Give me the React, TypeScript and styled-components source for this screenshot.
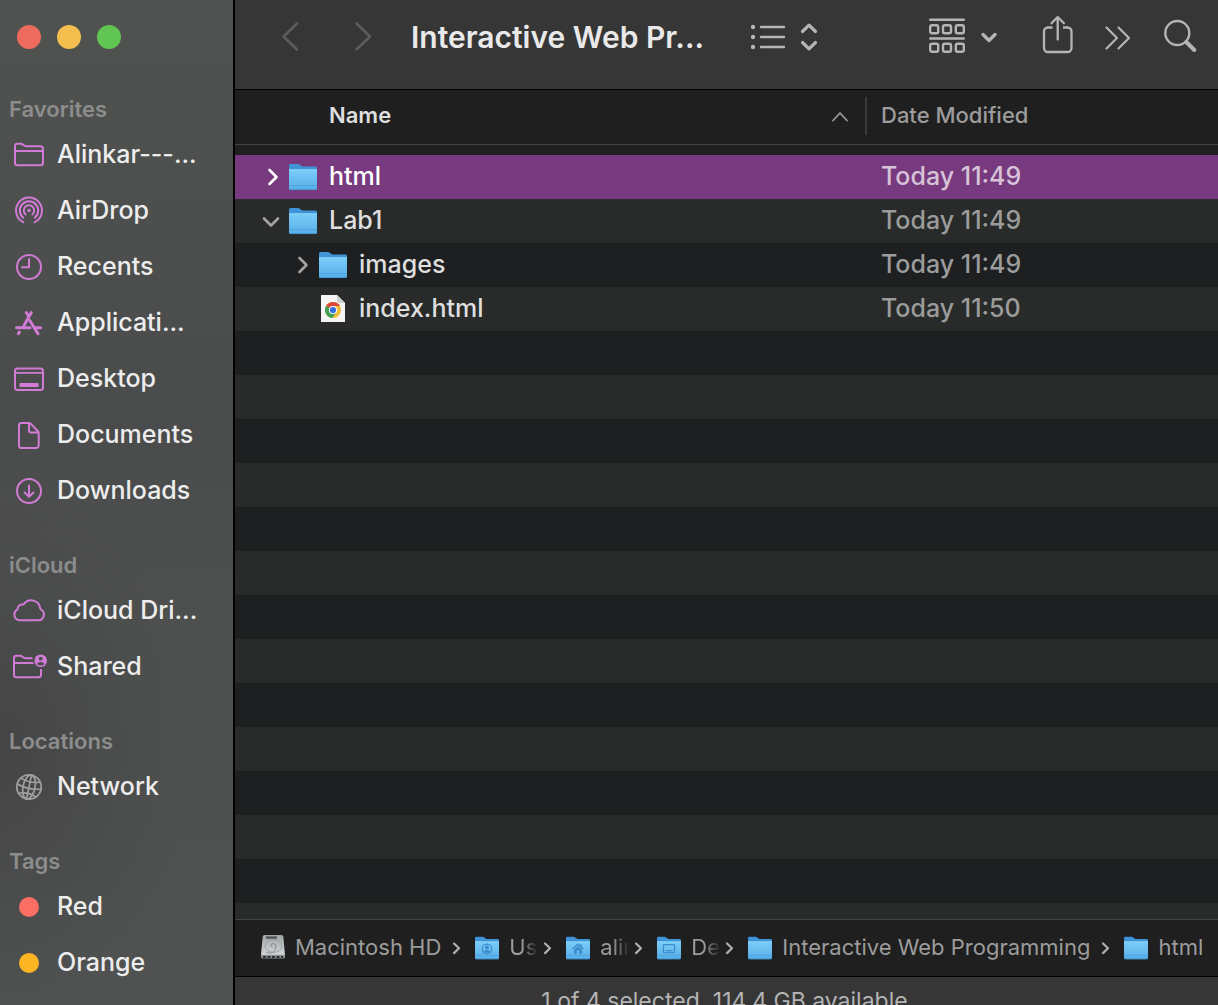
import React from "react";
import styled, { createGlobalStyle } from "styled-components";

const PINK = "#d27bd6";

const GlobalStyle = createGlobalStyle`
  *, *::before, *::after { box-sizing: border-box; }
  body {
    margin: 0;
    background: #1e1f21;
    font-family: Inter, "Liberation Sans", sans-serif;
    color: #e0e0e0;
  }
  button {
    font: inherit;
    color: inherit;
    background: none;
    border: 0;
    padding: 0;
    cursor: default;
  }
  svg { display: block; flex: none; }
`;

const Window = styled.div`
  display: flex;
  height: 100vh;
  overflow: hidden;
`;

/* ---------- Sidebar ---------- */

const Sidebar = styled.nav`
  flex: none;
  width: 235px;
  overflow: hidden;
  border-right: 2px solid #000;
  background:
    radial-gradient(ellipse 190px 260px at 0 750px, #454546 0%, rgba(69, 69, 70, 0) 100%),
    linear-gradient(180deg, #505250 0%, #4c4e4d 30%, #4a4b4c 42%, #4e504f 60%, #505251 100%);
`;

const TrafficLights = styled.div`
  display: flex;
  align-items: center;
  gap: 16px;
  height: 62px;
  padding: 12px 0 0 17px;
`;

const Light = styled.button<{ $color: string }>`
  width: 24px;
  height: 24px;
  border-radius: 50%;
  background: ${(p) => p.$color};
`;

const Section = styled.section`
  padding-top: 30px;
`;

const SectionTitle = styled.h2`
  margin: 0;
  padding-left: 9px;
  font-size: 22px;
  font-weight: 600;
  line-height: 34px;
  color: #8c8d8c;
`;

const SideList = styled.ul`
  margin: 0;
  padding: 0;
  list-style: none;
`;

const SideLink = styled.a`
  display: flex;
  align-items: center;
  gap: 10px;
  height: 56px;
  padding-left: 11px;
  font-size: 25px;
  font-weight: 500;
  line-height: 32px;
  color: #ededed;
  text-decoration: none;
  white-space: nowrap;
`;

/* ---------- Main pane ---------- */

const Main = styled.main`
  flex: 1;
  min-width: 0;
  display: flex;
  flex-direction: column;
`;

const Toolbar = styled.header`
  flex: none;
  display: flex;
  align-items: center;
  height: 90px;
  padding: 0 20px 16px 38px;
  background: #363636;
  border-bottom: 1px solid #000;
`;

const NavButtons = styled.div`
  display: flex;
  gap: 36px;
  color: #5c5c5c;
`;

const Title = styled.h1`
  flex: 0 1 337px;
  min-width: 0;
  margin: 0 0 0 30px;
  font-size: 30px;
  font-weight: 600;
  line-height: 36px;
  color: #e9e9e9;
  white-space: nowrap;
`;

const Tools = styled.div`
  display: flex;
  gap: 24px;
  margin-left: auto;
`;

const ToolButton = styled.button`
  flex: none;
  color: #b5b5b5;
`;

const ListArea = styled.div`
  flex: 1;
  min-height: 0;
  overflow: hidden;
  background:
    linear-gradient(#1e1f21, #1e1f21) 0 0 / 100% 65px no-repeat,
    linear-gradient(#1e1f21 50%, #292b2a 50%) 0 65px / 100% 88px;
`;

const FileTable = styled.table`
  width: 100%;
  table-layout: fixed;
  border-collapse: separate;
  border-spacing: 0;

  tbody::before {
    content: "";
    display: table-row;
    height: 10px;
  }
`;

const NameCol = styled.col`
  width: auto;
`;

const DateCol = styled.col`
  width: 353px;
`;

const HeadCell = styled.th`
  height: 55px;
  padding: 7px 0 0;
  background: #1f1f1f;
  border-bottom: 1px solid #424242;
  text-align: left;
  vertical-align: top;
`;

const SortButton = styled.button<{ $active?: boolean }>`
  display: flex;
  align-items: center;
  justify-content: space-between;
  width: 100%;
  height: 38px;
  padding: 0 16px 2px ${(p) => (p.$active ? 94 : 14)}px;
  border-left: ${(p) => (p.$active ? "0" : "2px solid #3a3a3a")};
  font-size: 22px;
  font-weight: ${(p) => (p.$active ? 600 : 500)};
  line-height: 28px;
  color: ${(p) => (p.$active ? "#dedede" : "#9c9c9c")};
`;

const Row = styled.tr<{ $selected?: boolean }>`
  height: 44px;
  background: ${(p) => (p.$selected ? "#783a7e" : "transparent")};
  color: ${(p) => (p.$selected ? "#ffffff" : "#dfdfdf")};
  --toggle: ${(p) => (p.$selected ? "#ffffff" : "#a3a3a3")};
  --date: ${(p) => (p.$selected ? "#d6c3d8" : "#9b9c9b")};
`;

const Cell = styled.td`
  padding: 0;
  font-size: 25px;
  font-weight: 500;
  line-height: 32px;
`;

const DateCell = styled(Cell)`
  padding: 0 0 2px 16px;
  color: var(--date);
`;

const NameLine = styled.div<{ $depth: number }>`
  display: flex;
  align-items: center;
  padding-left: ${(p) => 24 + p.$depth * 30}px;
`;

const ToggleSlot = styled.span`
  display: flex;
  width: 30px;
  color: var(--toggle);
`;

const FileName = styled.span`
  margin-left: 12px;
  padding-bottom: 2px;
`;

const PathBar = styled.nav`
  flex: none;
  display: flex;
  align-items: center;
  height: 58px;
  padding-left: 26px;
  background: #1f1f1f;
  border-top: 1px solid #424443;
  border-bottom: 1px solid #000;
  color: #9c9c9c;
`;

const Crumb = styled.a`
  display: flex;
  align-items: center;
  gap: 10px;
  font-size: 22px;
  line-height: 28px;
  color: inherit;
  text-decoration: none;
  white-space: nowrap;
`;

const CrumbText = styled.span<{ $faded?: boolean }>`
  padding-bottom: 2px;
  ${(p) =>
    p.$faded
      ? `width: 28px; overflow: hidden;
         mask-image: linear-gradient(90deg, #000 45%, transparent 105%);`
      : "padding-right: 5px;"}
`;

const CrumbArrow = styled.span`
  padding: 0 14px 0 6px;
`;

const StatusBar = styled.footer`
  flex: none;
  height: 28px;
  overflow: hidden;
  padding: 10px 4px 0 0;
  background: #363636;
  color: #b4b4b4;
  font-size: 23px;
  line-height: 28px;
  text-align: center;
`;

/* ---------- Icons ---------- */

type Kids = { children: React.ReactNode; color?: string };

const SideIcon = ({ children, color = PINK }: Kids) => (
  <svg width="36" height="36" viewBox="0 0 36 36" fill="none" stroke={color} strokeWidth="2" strokeLinecap="round" strokeLinejoin="round" aria-hidden="true">
    {children}
  </svg>
);

const icons: Record<string, React.ReactNode> = {
  folder: (
    <SideIcon>
      <path d="M4 26.500V10.200a2.400 2.400 0 0 1 2.400-2.400h3.400c1 0 1.600.3 2.300.9l.7.600c.7.600 1.300.9 2.300.9h14.400a2.500 2.500 0 0 1 2.500 2.500v14a2.500 2.500 0 0 1-2.500 2.500H6.500A2.500 2.500 0 0 1 4 26.700z" />
      <path d="M4 15h28" />
    </SideIcon>
  ),
  airdrop: (
    <SideIcon>
      <path d="M12.300 30.200a13 13 0 1 1 11.400 0" />
      <path d="M12.200 25.700a9.200 9.200 0 1 1 11.600 0" />
      <path d="M14.700 22.400a5.200 5.200 0 1 1 6.600 0" />
      <circle cx="18" cy="18.500" r="1.800" fill={PINK} stroke="none" />
    </SideIcon>
  ),
  recents: (
    <SideIcon>
      <circle cx="18" cy="19" r="12" />
      <path d="M18 11v8.300h-7" />
    </SideIcon>
  ),
  apps: (
    <SideIcon>
      <g strokeWidth="3">
        <path d="M20.300 8.500 12.500 22.500" />
        <path d="m15.300 8.500 2 3.300" />
        <path d="m18.800 16.500 8.200 13.300" />
        <path d="M5.500 23.700h13.500M25 23.700h4.500" />
        <path d="m7.400 29.700 1-1.700" />
      </g>
    </SideIcon>
  ),
  desktop: (
    <SideIcon>
      <rect x="4" y="8.500" width="28" height="21.500" rx="2.500" />
      <path d="M4 12.800h28" strokeWidth="1.700" />
      <rect x="8.500" y="23" width="19" height="4" rx="0.800" fill={PINK} stroke="none" />
    </SideIcon>
  ),
  documents: (
    <SideIcon>
      <path d="M10.500 7h7.300c.8 0 1.500.3 2.100.9l7 7.400c.5.500.8 1.200.8 2v12.200a2.500 2.500 0 0 1-2.500 2.500H10.500A2.500 2.500 0 0 1 8 29.500v-20A2.500 2.500 0 0 1 10.500 7z" />
      <path d="M18 7.500v7c0 1.300.6 1.900 1.900 1.900H27" />
    </SideIcon>
  ),
  downloads: (
    <SideIcon>
      <circle cx="18" cy="19" r="12" />
      <path d="M18 13.500v11M13.500 20.500l4.500 4.200 4.500-4.200" />
    </SideIcon>
  ),
  cloud: (
    <SideIcon>
      <path d="M8.500 28.300h18.800a5.800 5.800 0 0 0 2.700-10.800c-.5-.3-.7-.6-.8-1.200a9 9 0 0 0-16.200-4.300c-.3.500-.7.600-1.300.5a4.600 4.600 0 0 0-5.100 4.200c0 .6-.2.900-.7 1.200A5.700 5.700 0 0 0 8.500 28.300z" />
    </SideIcon>
  ),
  shared: (
    <SideIcon>
      <path d="M21.500 10.200h-7c-1 0-1.600-.3-2.300-.9l-.7-.6c-.7-.6-1.300-.900-2.300-.900H5.400A2.400 2.400 0 0 0 3 10.200v16.500a2.500 2.500 0 0 0 2.500 2.500H27.500a2.500 2.500 0 0 0 2.500-2.500V21" strokeLinecap="butt" />
      <path d="M3 15h19.500" strokeLinecap="butt" />
      <circle cx="29.700" cy="12.700" r="6.300" fill={PINK} stroke="none" />
      <circle cx="29.700" cy="10.700" r="1.900" fill="#4d4f4e" stroke="none" />
      <path d="M26 16.300c.6-1.600 2-2.300 3.700-2.300s3.100.7 3.700 2.300c-1 .8-2.200 1.200-3.700 1.200s-2.700-.4-3.700-1.200z" fill="#4d4f4e" stroke="none" />
    </SideIcon>
  ),
  network: (
    <SideIcon color="#a0a0a0">
      <g strokeWidth="1.700">
        <circle cx="18" cy="19" r="12.200" />
        <g transform="rotate(12 18 19)">
          <ellipse cx="18" cy="19" rx="6" ry="12.200" />
          <path d="M18 6.800v24.400M6 18.500c7.500 2.500 16.500 2.500 24 0M8.300 12c6 2.200 13.400 2.200 19.400 0M9 27.300c5.500-2.300 12.500-2.300 18 0" />
        </g>
      </g>
    </SideIcon>
  ),
  red: (
    <SideIcon>
      <circle cx="18" cy="19" r="10" fill="#fd6e64" stroke="none" />
    </SideIcon>
  ),
  orange: (
    <SideIcon>
      <circle cx="18" cy="19" r="10" fill="#feb524" stroke="none" />
    </SideIcon>
  ),
};

const Chevron = ({ open }: { open?: boolean }) => (
  <svg width="24" height="24" viewBox="0 0 24 24" fill="none" stroke="currentColor" strokeWidth="2.600" strokeLinecap="round" strokeLinejoin="round" aria-hidden="true">
    <path d={open ? "M5 9.500l7 7 7-7" : "M10.500 5l7 7-7 7"} />
  </svg>
);

const CrumbChevron = () => (
  <svg width="9" height="14" viewBox="0 0 9 14" fill="none" stroke="#b0b0b0" strokeWidth="2.200" strokeLinecap="round" strokeLinejoin="round" aria-hidden="true">
    <path d="M2 2.500l5 4.800-5 4.800" />
  </svg>
);

const FolderGradients = () => (
  <svg width="0" height="0" style={{ position: "absolute" }} aria-hidden="true">
    <defs>
      <linearGradient id="folderFront" x1="0" y1="0" x2="0" y2="1">
        <stop offset="0" stopColor="#7bcdf8" />
        <stop offset="1" stopColor="#57ade8" />
      </linearGradient>
      <linearGradient id="driveTop" x1="0" y1="0" x2="0" y2="1">
        <stop offset="0" stopColor="#9fa3a6" />
        <stop offset="1" stopColor="#d2d7da" />
      </linearGradient>
    </defs>
  </svg>
);

const Folder = ({ size = 28, mark }: { size?: number; mark?: "user" | "home" | "desktop" }) => (
  <svg width={size} height={size} viewBox="0 0 28 28" aria-hidden="true">
    <path d="M0 2.500a1.500 1.500 0 0 1 1.500-1.500h7.300c.8 0 1.400.2 2 .7l1.700 1.300c.4.300.8.500 1.300.5h12.700A1.500 1.500 0 0 1 28 5V12H0z" fill="#3f94d8" />
    <path d="M0 6.500h28v19a1.500 1.500 0 0 1-1.500 1.500h-25A1.500 1.500 0 0 1 0 25.500z" fill="url(#folderFront)" />
    <path d="M0 6.800h28" stroke="#92d9fb" strokeWidth="0.800" />
    <path d="M0 22.500h28" stroke="#4a9fdb" strokeWidth="0.800" />
    <path d="M0.500 26.600h27" stroke="#3d8fcc" strokeWidth="0.800" />
    {mark === "user" && (
      <g fill="none" stroke="#3a8bc9" strokeWidth="1.400">
        <circle cx="14" cy="15" r="5.500" />
        <circle cx="14" cy="13.300" r="1.500" fill="#3a8bc9" />
        <path d="M10.800 18.500c1.500-2 4.900-2 6.400 0z" fill="#3a8bc9" />
      </g>
    )}
    {mark === "home" && (
      <g fill="#3a8bc9">
        <path d="M14 8.500l-6.800 6 1 1.200 5.800-5 5.800 5 1-1.200-2.300-2v-3h-1.500v1.700z" />
        <path d="M9.500 15.800L14 12l4.500 3.800v5h-3v-3.800h-3v3.800h-3z" />
      </g>
    )}
    {mark === "desktop" && (
      <g fill="none" stroke="#3a8bc9" strokeWidth="1.300">
        <rect x="7.500" y="10" width="13" height="9.500" rx="1" />
        <path d="M10 17.200h8" />
      </g>
    )}
  </svg>
);

const HardDrive = () => (
  <svg width="24" height="26" viewBox="0 0 24 26" aria-hidden="true">
    <path d="M3.500 0h17a1.800 1.800 0 0 1 1.800 1.500L24 20H0L1.700 1.500A1.800 1.800 0 0 1 3.500 0z" fill="url(#driveTop)" />
    <path d="M0 19.700h24v2.300a1.500 1.500 0 0 1-1.500 1.500h-21A1.500 1.500 0 0 1 0 22z" fill="#8d9295" />
    <path d="M2 22h20" stroke="#2e3032" strokeWidth="2" strokeDasharray="3 1.500" />
    <rect x="5" y="1.300" width="11" height="2.600" fill="#555a5d" />
    <ellipse cx="12.500" cy="11" rx="8.500" ry="6.300" fill="none" stroke="#9aa0a4" strokeWidth="1" />
    <path d="M5 17c4 2 8 1 9-2.500l1-3.500a2.500 2 0 1 0-3.500 1.500" fill="none" stroke="#868c90" strokeWidth="1" />
  </svg>
);

const HtmlFile = () => (
  <svg width="28" height="28" viewBox="0 0 28 28" aria-hidden="true">
    <path d="M2 0h16l8 8v19H2z" fill="#f5f5f5" />
    <path d="M18 0l8 8h-6.500A1.500 1.500 0 0 1 18 6.500z" fill="#cfcfcf" />
    <circle cx="14" cy="15" r="8" fill="#f2bf3b" />
    <path d="M14 15L7.070 11a8 8 0 0 1 13.860 0z" fill="#d9483b" />
    <path d="M7.070 11a8 8 0 0 0 6.200 11.970L17.500 17 14 15z" fill="#3f9f55" />
    <path d="M14 11h6.930L17.500 17z" fill="#f2bf3b" />
    <circle cx="14" cy="15" r="4" fill="#fff" />
    <circle cx="14" cy="15" r="3.100" fill="#2f6fe0" />
  </svg>
);

const strokeProps = {
  fill: "none",
  stroke: "currentColor",
  strokeLinecap: "round" as const,
  strokeLinejoin: "round" as const,
  "aria-hidden": true,
};

const NavArrow = ({ d }: { d: string }) => (
  <svg width="36" height="44" viewBox="0 0 36 44" strokeWidth="2.600" {...strokeProps}>
    <path d={d} />
  </svg>
);

const ViewIcon = () => (
  <svg width="72" height="44" viewBox="0 0 72 44" strokeWidth="2.400" {...strokeProps}>
    <path d="M13 12h23M13 22h23M13 32h23" />
    <g fill="currentColor" stroke="none">
      <circle cx="5" cy="12" r="2.200" />
      <circle cx="5" cy="22" r="2.200" />
      <circle cx="5" cy="32" r="2.200" />
    </g>
    <path d="M54.500 16.500l6.500-6.300 6.500 6.300M54.500 27.500l6.500 6.300 6.500-6.300" strokeWidth="3.200" />
  </svg>
);

const GroupIcon = () => (
  <svg width="88" height="44" viewBox="0 0 88 44" strokeWidth="2.400" {...strokeProps}>
    <path d="M4.200 4.700h33.600M4.200 23.500h33.600" />
    {[10.200, 28.800].map((y) =>
      [4.200, 17, 29.800].map((x) => <rect key={`${x}-${y}`} x={x} y={y} width="8" height="8" rx="1.800" />)
    )}
    <path d="M57 19.500l6 6 6-6" strokeWidth="3.400" />
  </svg>
);

const ShareIcon = () => (
  <svg width="40" height="44" viewBox="0 0 40 44" strokeWidth="2.300" {...strokeProps}>
    <path d="M14.500 12.500H10a4 4 0 0 0-4 4v16.500a4 4 0 0 0 4 4h19.500a4 4 0 0 0 4-4V16.500a4 4 0 0 0-4-4H25" strokeLinecap="butt" />
    <path d="M19.700 24.500V2.500M13.500 8.200l6.200-6.200 6.200 6.200" />
  </svg>
);

const MoreIcon = () => (
  <svg width="36" height="44" viewBox="0 0 36 44" strokeWidth="2.200" {...strokeProps}>
    <path d="M4.500 12.500l10.500 10.500L4.500 33.500M16.500 12.500L27 23 16.500 33.500" />
  </svg>
);

const SearchIcon = () => (
  <svg width="36" height="44" viewBox="0 0 36 44" {...strokeProps}>
    <circle cx="15.300" cy="18" r="12" strokeWidth="2.400" />
    <path d="M24.300 27l8 8" strokeWidth="4" />
  </svg>
);

/* ---------- Data ---------- */

const sections = [
  {
    title: "Favorites",
    items: [
      ["folder", "Alinkar---..."],
      ["airdrop", "AirDrop"],
      ["recents", "Recents"],
      ["apps", "Applicati..."],
      ["desktop", "Desktop"],
      ["documents", "Documents"],
      ["downloads", "Downloads"],
    ],
  },
  { title: "iCloud", items: [["cloud", "iCloud Dri..."], ["shared", "Shared"]] },
  { title: "Locations", items: [["network", "Network"]] },
  { title: "Tags", items: [["red", "Red"], ["orange", "Orange"]] },
];

type FileRow = { name: string; date: string; depth: number; kind: "folder" | "file"; open?: boolean; selected?: boolean };

const files: FileRow[] = [
  { name: "html", date: "Today 11:49", depth: 0, kind: "folder", selected: true },
  { name: "Lab1", date: "Today 11:49", depth: 0, kind: "folder", open: true },
  { name: "images", date: "Today 11:49", depth: 1, kind: "folder" },
  { name: "index.html", date: "Today 11:50", depth: 1, kind: "file" },
];

const crumbs: { name: string; icon: React.ReactNode; faded?: boolean }[] = [
  { name: "Macintosh HD", icon: <HardDrive /> },
  { name: "Us", icon: <Folder size={24} mark="user" />, faded: true },
  { name: "alin", icon: <Folder size={24} mark="home" />, faded: true },
  { name: "De", icon: <Folder size={24} mark="desktop" />, faded: true },
  { name: "Interactive Web Programming", icon: <Folder size={24} /> },
  { name: "html", icon: <Folder size={24} /> },
];

export default function App() {
  return (
    <>
      <GlobalStyle />
      <FolderGradients />
      <Window>
        <Sidebar aria-label="Sidebar">
          <TrafficLights>
            <Light $color="#ed6a5e" aria-label="Close" />
            <Light $color="#f5bf4f" aria-label="Minimize" />
            <Light $color="#61c554" aria-label="Zoom" />
          </TrafficLights>
          {sections.map((section) => (
            <Section key={section.title}>
              <SectionTitle>{section.title}</SectionTitle>
              <SideList>
                {section.items.map(([icon, label]) => (
                  <li key={label}>
                    <SideLink href="#">
                      {icons[icon]}
                      <span>{label}</span>
                    </SideLink>
                  </li>
                ))}
              </SideList>
            </Section>
          ))}
        </Sidebar>

        <Main>
          <Toolbar>
            <NavButtons>
              <button aria-label="Back" disabled>
                <NavArrow d="M24 8.500L10.500 21.500l13.500 13" />
              </button>
              <button aria-label="Forward" disabled>
                <NavArrow d="M11.500 8.500L25 21.500 11.500 34.500" />
              </button>
            </NavButtons>
            <Title>Interactive Web Pr...</Title>
            <ToolButton aria-label="View as list">
              <ViewIcon />
            </ToolButton>
            <Tools>
              <ToolButton aria-label="Group items">
                <GroupIcon />
              </ToolButton>
              <ToolButton aria-label="Share">
                <ShareIcon />
              </ToolButton>
              <ToolButton aria-label="More">
                <MoreIcon />
              </ToolButton>
              <ToolButton aria-label="Search">
                <SearchIcon />
              </ToolButton>
            </Tools>
          </Toolbar>

          <ListArea>
            <FileTable>
              <colgroup>
                <NameCol />
                <DateCol />
              </colgroup>
              <thead>
                <tr>
                  <HeadCell aria-sort="ascending">
                    <SortButton $active>
                      Name
                      <svg width="18" height="16" viewBox="0 0 18 16" strokeWidth="1.800" {...strokeProps}>
                        <path d="M2 13.500l7-7.500 7 7.500" stroke="#9c9c9c" />
                      </svg>
                    </SortButton>
                  </HeadCell>
                  <HeadCell>
                    <SortButton>Date Modified</SortButton>
                  </HeadCell>
                </tr>
              </thead>
              <tbody>
                {files.map((file) => (
                  <Row key={file.name} $selected={file.selected}>
                    <Cell>
                      <NameLine $depth={file.depth}>
                        <ToggleSlot>
                          {file.kind === "folder" && (
                            <button aria-label={`Toggle ${file.name}`} aria-expanded={!!file.open}>
                              <Chevron open={file.open} />
                            </button>
                          )}
                        </ToggleSlot>
                        {file.kind === "folder" ? <Folder /> : <HtmlFile />}
                        <FileName>{file.name}</FileName>
                      </NameLine>
                    </Cell>
                    <DateCell>{file.date}</DateCell>
                  </Row>
                ))}
              </tbody>
            </FileTable>
          </ListArea>

          <PathBar aria-label="Path">
            {crumbs.map((crumb, i) => (
              <React.Fragment key={crumb.name}>
                <Crumb href="#">
                  {crumb.icon}
                  <CrumbText $faded={crumb.faded}>{crumb.name}</CrumbText>
                </Crumb>
                {i < crumbs.length - 1 && (
                  <CrumbArrow>
                    <CrumbChevron />
                  </CrumbArrow>
                )}
              </React.Fragment>
            ))}
          </PathBar>
          <StatusBar>1 of 4 selected, 114.4 GB available</StatusBar>
        </Main>
      </Window>
    </>
  );
}
